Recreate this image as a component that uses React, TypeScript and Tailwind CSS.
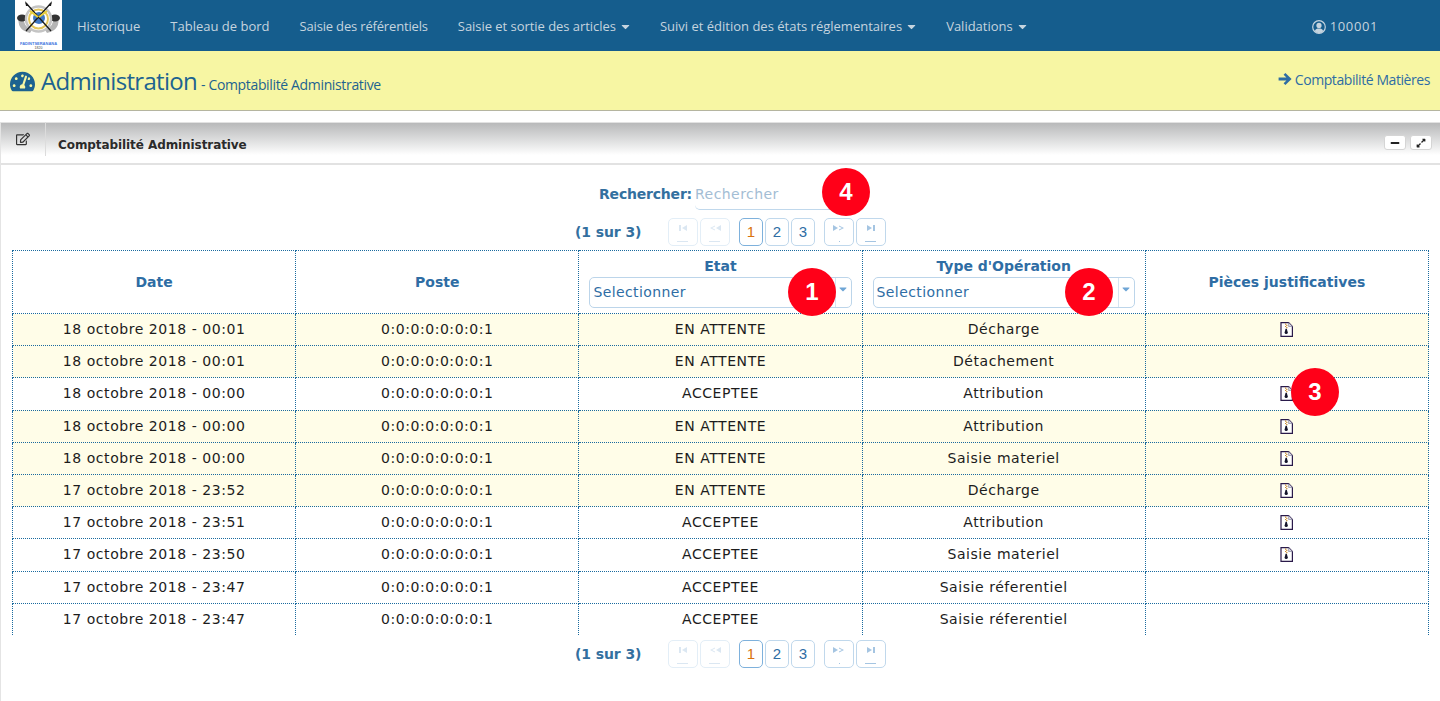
import React from "react";
import { FaCaretDown, FaRegEdit, FaTachometerAlt, FaMinus, FaExpandAlt } from "react-icons/fa";

const menu = [
  { label: "Historique", cls: "" },
  { label: "Tableau de bord", cls: "" },
  { label: "Saisie des référentiels", cls: "tracking-[-0.17px]" },
  { label: "Saisie et sortie des articles", caret: true, cls: "tracking-[-0.04px]" },
  { label: "Suivi et édition des états réglementaires", caret: true, cls: "" },
  { label: "Validations", caret: true, cls: "" },
];

const rows = [
  { date: "18 octobre 2018 - 00:01", etat: "EN ATTENTE", type: "Décharge", file: true },
  { date: "18 octobre 2018 - 00:01", etat: "EN ATTENTE", type: "Détachement", file: false },
  { date: "18 octobre 2018 - 00:00", etat: "ACCEPTEE", type: "Attribution", file: true },
  { date: "18 octobre 2018 - 00:00", etat: "EN ATTENTE", type: "Attribution", file: true },
  { date: "18 octobre 2018 - 00:00", etat: "EN ATTENTE", type: "Saisie materiel", file: true },
  { date: "17 octobre 2018 - 23:52", etat: "EN ATTENTE", type: "Décharge", file: true },
  { date: "17 octobre 2018 - 23:51", etat: "ACCEPTEE", type: "Attribution", file: true },
  { date: "17 octobre 2018 - 23:50", etat: "ACCEPTEE", type: "Saisie materiel", file: true },
  { date: "17 octobre 2018 - 23:47", etat: "ACCEPTEE", type: "Saisie réferentiel", file: false },
  { date: "17 octobre 2018 - 23:47", etat: "ACCEPTEE", type: "Saisie réferentiel", file: false },
];

const Logo = () => (
  <div className="w-[47px] h-[50px] bg-white shrink-0 flex flex-col items-center overflow-hidden">
    <svg viewBox="0 0 47 42" className="w-[47px] h-[42px]">
      <path d="M4 16 Q1 30 15 33 L17 30 Q8 27 9 17 Z" fill="#b5b5b5" />
      <path d="M43 16 Q46 30 32 33 L30 30 Q39 27 38 17 Z" fill="#b5b5b5" />
      <ellipse cx="7" cy="18" rx="5" ry="3.5" fill="#333" />
      <ellipse cx="40" cy="18" rx="5" ry="3.5" fill="#333" />
      <circle cx="23.5" cy="19" r="12.5" fill="none" stroke="#c4c4c4" strokeWidth="2.5" />
      <circle cx="23.5" cy="19" r="9.5" fill="none" stroke="#e4c65a" strokeWidth="2" />
      <circle cx="24" cy="18" r="6" fill="#3f78c4" />
      <path d="M11 3 L36 31 M36 3 L11 31" stroke="#1c1c1c" strokeWidth="1.3" />
      <path d="M10 1 L14 6 L11 6 Z M37 1 L33 6 L36 6 Z" fill="#1c1c1c" />
      <path d="M15 11 L23 17 M32 11 L24 17" stroke="#e8cf3a" strokeWidth="2" />
    </svg>
    <span className="text-[4px] leading-[4px] font-bold text-[#3f78e0] font-['Liberation_Sans',sans-serif]">FADINTSERANANA</span>
    <span className="text-[3.5px] leading-[4px] text-[#444] font-['Liberation_Sans',sans-serif]">1820</span>
  </div>
);

const UserIcon = () => (
  <svg viewBox="0 0 14 14" className="w-[14px] h-[14px]">
    <circle cx="7" cy="7" r="6.3" fill="none" stroke="#c5d4df" strokeWidth="1.2" />
    <circle cx="7" cy="5.4" r="2.6" fill="#c5d4df" />
    <path d="M2.8 11 C3.4 8.8 5 8.4 7 8.4 C9 8.4 10.6 8.8 11.2 11 C10 12.5 8.5 13 7 13 C5.5 13 4 12.5 2.8 11 Z" fill="#c5d4df" />
  </svg>
);

const ArrowIcon = () => (
  <svg viewBox="0 0 14 14" className="w-[14px] h-[14px]">
    <path d="M7.4 1 L13.6 7 L7.4 13 L5.6 11.2 L8.4 8.6 H.6 V5.4 H8.4 L5.6 2.8 Z" fill="#2e6da4" />
  </svg>
);

const ZipIcon = () => (
  <svg viewBox="0 0 13 15" className="w-[13px] h-[15px]">
    <path d="M1 .7 H8.6 L12.4 4.5 V14.3 H1 Z" fill="#fff" stroke="#2a1a4a" strokeWidth="1.2" />
    <path d="M8.6 .7 V4.5 H12.4" fill="#d8d8e4" stroke="#8a8aa0" strokeWidth=".7" />
    <path d="M5 1.5 H6.2 V2.7 H5 Z M6.2 2.7 H7.4 V3.9 H6.2 Z M5 3.9 H6.2 V5.1 H5 Z M6.2 5.1 H7.4 V6.3 H6.2 Z" fill="#c98a2a" />
    <path d="M5.6 6.8 H6.8 L7.8 10.4 A1.6 1.6 0 1 1 4.6 10.4 Z" fill="#14142a" />
  </svg>
);

const PagerButton = ({ children, width = "w-[30px]", dim = false, active = false }: { children: React.ReactNode; width?: string; dim?: boolean; active?: boolean }) => (
  <span className={`${width} h-[28px] flex items-center justify-center rounded-[5px] border bg-white ${active ? "border-[#7eb1dc]" : dim ? "border-[#e3eef7]" : "border-[#c0d8ec]"}`}>
    {children}
  </span>
);

const Skip = ({ dir, dim, bar }: { dir: "l" | "r"; dim?: boolean; bar?: boolean }) => (
  <svg viewBox="0 0 18 22" className="w-[18px] h-[22px]">
    <g fill={dim ? "#dbe7f2" : "#a5c5e2"} transform={dir === "l" ? "translate(18 0) scale(-1 1)" : undefined}>
      {bar ? (
        <>
          <path d="M5 4 L10 7 L5 10 Z" />
          <rect x="11" y="4" width="2" height="6" />
        </>
      ) : (
        <>
          <path d="M3 4 L8 7 L3 10 Z" />
          <path d="M9 4.5 L14 7 L9 9.5 L9 8.5 L12 7 L9 5.5 Z" />
        </>
      )}
    </g>
    {bar || dim ? <rect x="3" y="20" width="11" height="1" fill={dim ? "#dbe7f2" : "#a5c5e2"} /> : <rect x="9" y="20" width="1" height="1" fill="#a5c5e2" />}
  </svg>
);

const Pager = () => (
  <div className="flex items-center h-[28px] ml-[574px]">
    <span className="w-[93px] font-bold text-[14px] text-[#33709f] tracking-[-0.1px]">(1 sur 3)</span>
    <div className="flex gap-[2px]">
      <PagerButton dim><Skip dir="l" dim bar /></PagerButton>
      <PagerButton dim><Skip dir="l" dim /></PagerButton>
    </div>
    <div className="flex gap-[2px] ml-[9px] text-[15px] font-['Liberation_Sans',sans-serif] text-[#2e6da4]">
      <PagerButton width="w-[24px]" active><span className="text-[#d9730d]">1</span></PagerButton>
      <PagerButton width="w-[24px]">2</PagerButton>
      <PagerButton width="w-[24px]">3</PagerButton>
    </div>
    <div className="flex gap-[2px] ml-[9px]">
      <PagerButton><Skip dir="r" /></PagerButton>
      <PagerButton><Skip dir="r" bar /></PagerButton>
    </div>
  </div>
);

const SelectBox = () => (
  <div className="mx-[10px] h-[31px] flex rounded-[5px] border border-[#bcd5ea] bg-white text-[14px] font-normal tracking-[0.4px] text-[#2e6da4]">
    <span className="flex-1 flex items-center pl-[3px]">Selectionner</span>
    <span className="w-[16px] border-l border-[#d5e4f1] flex justify-center pt-[5px] text-[#6fa6d6]">
      <FaCaretDown size={12} />
    </span>
  </div>
);

const Badge = ({ n, pos }: { n: number; pos: string }) => (
  <span className={`absolute ${pos} w-[48px] h-[48px] rounded-full bg-[#ff0018] text-white flex items-center justify-center font-bold text-[24px] font-['Liberation_Sans',sans-serif]`}>
    {n}
  </span>
);

const th = "border border-dotted border-[#1a6a9e] font-bold text-[14px] text-[#2e6da4] p-0 text-center";
const td = "border border-dotted border-[#1a6a9e] p-0 text-center text-[14px] tracking-[0.55px] text-[#1c1c1c] h-[32.2px]";

export default function App() {
  return (
    <div className="relative w-[1440px] h-[701px] overflow-hidden bg-white font-['DejaVu_Sans',sans-serif]">
      <nav className="h-[51px] bg-[#155d8d] flex items-start pl-[15px] text-[13px] font-['Open_Sans',sans-serif] text-[#c5d4df]">
        <Logo />
        <ul className="flex items-center h-[51px] gap-[30px] ml-[15px] mt-[1px]">
          {menu.map((item) => (
            <li key={item.label} className={`flex items-center gap-[3px] ${item.cls}`}>
              {item.label}
              {item.caret && <FaCaretDown size={13} className="-mr-[2px]" />}
            </li>
          ))}
        </ul>
        <div className="ml-auto mr-[62px] h-[51px] flex items-center gap-[4px] mt-[1px] tracking-[0.6px]">
          <UserIcon />
          100001
        </div>
      </nav>

      <header className="h-[60px] bg-[#f7f6a3] border-b border-[#b5b5a0] flex items-center pl-[10px] pr-[10px] text-[#1d6390] font-['Open_Sans',sans-serif]">
        <FaTachometerAlt size={25} className="mt-[1px]" />
        <h1 className="text-[24px] ml-[6px] tracking-[-0.7px]">Administration</h1>
        <span className="text-[14px] ml-[4px] mt-[7px] tracking-[-0.35px]">- Comptabilité Administrative</span>
        <a className="ml-auto flex items-center gap-[3px] text-[14px] text-[#2e6da4] -mt-[3px] tracking-[-0.43px]">
          <ArrowIcon />
          Comptabilité Matières
        </a>
      </header>

      <section className="mt-[11px] h-[579px] border-l border-[#e4e4e4]">
        <div className="h-[43px] flex items-center bg-gradient-to-b from-[#b8b9ba] to-[#ffffff] to-80% border-t border-b-2 border-[#e2e2e2]">
          <span className="w-[45px] h-[34px] -mt-[8px] border-r border-[#dcdcdc] flex items-center justify-center text-[#333]">
            <FaRegEdit size={14} />
          </span>
          <h2 className="ml-[12px] mt-[4px] font-bold text-[12px] tracking-[-0.08px] text-[#2b2b2b]">Comptabilité Administrative</h2>
          <div className="ml-auto flex gap-[4px] mr-[8px] -mt-[1px]">
            <span className="w-[22px] h-[15px] rounded-[3px] bg-white border border-[#d5d5d5] flex items-center justify-center text-[#222]"><FaMinus size={10} /></span>
            <span className="w-[22px] h-[15px] rounded-[3px] bg-white border border-[#d5d5d5] flex items-center justify-center text-[#222]"><FaExpandAlt size={10} /></span>
          </div>
        </div>

        <div className="h-[53px] flex items-start pt-[19px] pl-[598px] text-[14px]">
          <span className="font-bold text-[#33709f] tracking-[-0.2px]">Rechercher:</span>
          <span className="ml-[3px] w-[140px] h-[26px] border-b border-[#c0d8ec] rounded-bl-[5px] text-[#a3bdd4] tracking-[0.45px]">Rechercher</span>
        </div>
        <Pager />

        <table className="mt-[4px] ml-[11px] w-[1417px] table-fixed border-collapse">
          <thead>
            <tr className="h-[63px]">
              <th className={th}>Date</th>
              <th className={th}>Poste</th>
              <th className={th}>
                Etat
                <SelectBox />
              </th>
              <th className={th}>
                Type d'Opération
                <SelectBox />
              </th>
              <th className={th}>Pièces justificatives</th>
            </tr>
          </thead>
          <tbody>
            {rows.map((row, index) => {
              const bg = row.etat === "EN ATTENTE" ? "bg-[#fffde8]" : "bg-white";
              const last = index === rows.length - 1 ? "border-b-0" : "";
              return (
                <tr key={index} className={bg}>
                  <td className={`${td} ${last}`}>{row.date}</td>
                  <td className={`${td} ${last}`}>0:0:0:0:0:0:0:1</td>
                  <td className={`${td} ${last}`}>{row.etat}</td>
                  <td className={`${td} ${last}`}>{row.type}</td>
                  <td className={`${td} ${last}`}>
                    {row.file && (
                      <span className="flex justify-center">
                        <ZipIcon />
                      </span>
                    )}
                  </td>
                </tr>
              );
            })}
          </tbody>
        </table>

        <div className="mt-[5px]">
          <Pager />
        </div>
      </section>

      <Badge n={1} pos="left-[788px] top-[268px]" />
      <Badge n={2} pos="left-[1065px] top-[268px]" />
      <Badge n={3} pos="left-[1291px] top-[368px]" />
      <Badge n={4} pos="left-[822px] top-[168px]" />
    </div>
  );
}
